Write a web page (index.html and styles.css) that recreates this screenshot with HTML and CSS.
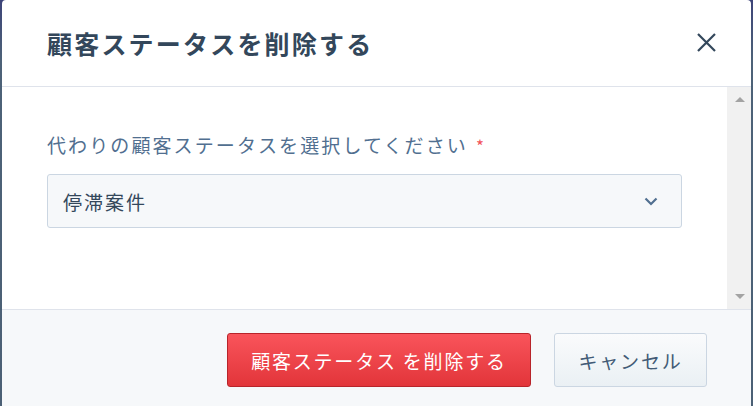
FILE: index.html
```html
<!DOCTYPE html>
<html lang="ja">
<head>
    <meta charset="UTF-8">
    <title>顧客ステータスを削除する</title>
    <link rel="stylesheet" href="styles.css">
</head>
<body>
<div class="modal">
    <div class="modal-header">
        <h2 class="modal-title">顧客ステータスを削除する</h2>
        <span class="close-btn">
            <svg width="19" height="19" viewBox="0 0 19 19"><path d="M1 1L18 18M18 1L1 18" stroke="#33475b" stroke-width="2.2" fill="none"/></svg>
        </span>
    </div>
    <div class="modal-body">
        <div class="body-content">
            <label class="field-label">代わりの顧客ステータスを選択してください<span class="required">*</span></label>
            <div class="select">
                <span class="select-value">停滞案件</span>
                <svg width="14" height="9" viewBox="0 0 14 9"><path d="M1.5 1.5L7 7L12.5 1.5" stroke="#516f90" stroke-width="2.2" fill="none"/></svg>
            </div>
        </div>
        <div class="scrollbar">
            <span class="arrow-up"></span>
            <span class="arrow-down"></span>
        </div>
    </div>
    <div class="modal-footer">
        <button class="btn btn-danger">顧客ステータス を削除する</button>
        <button class="btn btn-default">キャンセル</button>
    </div>
</div>
</body>
</html>
```

FILE: styles.css
```css
*{
    margin: 0;
    padding: 0;
    box-sizing: border-box;
}
body{
    width: 753px;
    height: 406px;
    overflow: hidden;
    background: linear-gradient(#3d4479, #4d6278 60px, #4b6075);
    padding: 0 2px;
    font-family: "Noto Sans CJK JP", "Noto Sans", sans-serif;
}
.modal{
    height: 406px;
    background: #fff;
    border-radius: 4px 4px 0 0;
    display: flex;
    flex-direction: column;
}
.modal-header{
    height: 87px;
    border-bottom: 1px solid #dfe3eb;
    display: flex;
    align-items: center;
    justify-content: space-between;
    padding: 0 35px 0 45px;
}
.modal-title{
    font-size: 25px;
    font-weight: 700;
    color: #33475b;
    letter-spacing: 2.2px;
    margin-top: -1px;
}
.close-btn{
    display: flex;
    margin-top: -2px;
}
.modal-body{
    height: 222px;
    display: flex;
}
.body-content{
    flex: 1;
    padding: 44px 0 0 45px;
}
.field-label{
    display: block;
    font-size: 19px;
    color: #516f90;
    letter-spacing: 2.1px;
    line-height: 28px;
}
.required{
    color: #f2545b;
    margin-left: 8px;
    font-size: 17px;
}
.select{
    margin-top: 14px;
    width: 635px;
    height: 54px;
    background: #f6f8fa;
    border: 1px solid #cbd6e2;
    border-radius: 3px;
    display: flex;
    align-items: center;
    justify-content: space-between;
    padding: 0 23px 0 15px;
}
.select-value{
    font-size: 19px;
    color: #33475b;
    letter-spacing: 2px;
}
.scrollbar{
    width: 24px;
    background: #f1f1f1;
    display: flex;
    flex-direction: column;
    justify-content: space-between;
    align-items: center;
    padding: 10px 0 10px 1px;
}
.arrow-up,.arrow-down{
    width: 0;
    height: 0;
    border-left: 5px solid transparent;
    border-right: 5px solid transparent;
}
.arrow-up{
    border-bottom: 5px solid #a3a3a3;
}
.arrow-down{
    border-top: 5px solid #a3a3a3;
}
.modal-footer{
    flex: 1;
    background: #f6f8fa;
    border-top: 1px solid #dfe3eb;
    display: flex;
    justify-content: flex-end;
    align-items: flex-start;
    padding: 23px 44px 0 0;
    gap: 23px;
}
.btn{
    height: 54px;
    border-radius: 3px;
    font-family: "Noto Sans CJK JP", "Noto Sans", sans-serif;
    font-size: 19px;
    letter-spacing: 1.8px;
    cursor: pointer;
}
.btn-danger{
    width: 304px;
    color: #fff;
    background: linear-gradient(#f9545b, #e2353a);
    border: 1px solid #b8242a;
}
.btn-default{
    width: 153px;
    color: #425b76;
    background: linear-gradient(#fafbfc, #eaf0f4);
    border: 1px solid #cbd6e2;
}
```
